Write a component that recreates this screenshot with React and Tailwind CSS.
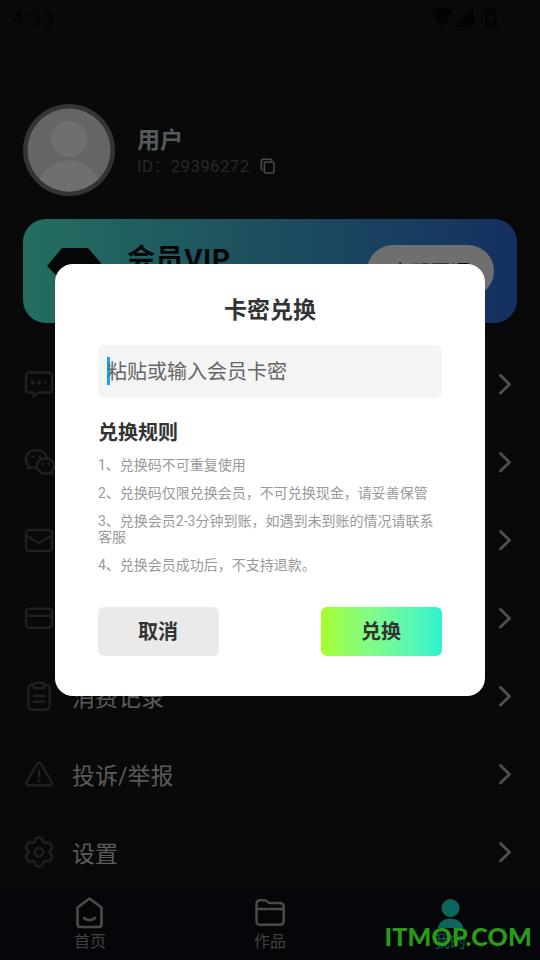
import React from 'react';

const ChatIcon = () => (
  <svg width="32" height="32" viewBox="0 0 32 32" fill="none" stroke="currentColor" strokeWidth="2.4" strokeLinejoin="round">
    <path d="M6 4.500h20a3 3 0 0 1 3 3v14a3 3 0 0 1-3 3H15.500l-5 4.500v-4.500H6a3 3 0 0 1-3-3v-14a3 3 0 0 1 3-3Z" />
    <g fill="currentColor" stroke="none">
      <circle cx="9.800" cy="14.500" r="1.900" />
      <circle cx="16" cy="14.500" r="1.900" />
      <circle cx="22.300" cy="14.500" r="1.900" opacity="0.5" />
    </g>
  </svg>
);

const WechatIcon = () => (
  <svg width="32" height="32" viewBox="0 0 32 32" fill="none" stroke="currentColor" strokeWidth="2.400" strokeLinejoin="round">
    <path d="M13.500 21.600c-1.800.300-3.400.100-5-.500l-3.500 1.400.500-3.300C3.500 17.500 2.800 15.300 2.800 13 2.800 7.800 7.500 4 13.300 4c5.300 0 9.800 3 10.600 8.300" />
    <path d="M22.500 12.500c-5 0-8.800 3.300-8.800 7.600s3.900 7.600 8.800 7.600c1.400 0 2.700-.300 3.900-.8l3.300 1.300-.9-3.200c1.600-1.400 2.400-3.100 2.400-4.900 0-4.300-3.900-7.600-8.700-7.600Z" />
    <g fill="currentColor" stroke="none">
      <circle cx="9.800" cy="11" r="1.400" />
      <circle cx="16.800" cy="11" r="1.400" />
      <circle cx="19.800" cy="18" r="1.400" />
      <circle cx="25.500" cy="18" r="1.400" />
    </g>
  </svg>
);

const MailIcon = () => (
  <svg width="32" height="32" viewBox="0 0 32 32" fill="none" stroke="currentColor" strokeWidth="2.400" strokeLinejoin="round">
    <rect x="3" y="6" width="26" height="21" rx="3" />
    <path d="m4 12 12 7 12-7" />
  </svg>
);

const CardIcon = () => (
  <svg width="32" height="32" viewBox="0 0 32 32" fill="none" stroke="currentColor" strokeWidth="2.400">
    <rect x="3" y="6.800" width="26" height="19" rx="3" />
    <path d="M3 13.800h26" />
  </svg>
);

const ClipboardIcon = () => (
  <svg width="32" height="32" viewBox="0 0 32 32" fill="none" stroke="currentColor" strokeWidth="2.400" strokeLinejoin="round" strokeLinecap="round">
    <path d="M10.500 4.600C7 4.600 5.300 6 5.300 9.300v16c0 3 1.500 4.500 4.500 4.500h12.400c3 0 4.500-1.500 4.500-4.500v-16c0-3.300-1.700-4.700-5.200-4.700" />
    <rect x="10.500" y="3" width="11" height="5.200" rx="2" />
    <path d="M10.800 16h10.500M10.800 21.700h10.500" />
  </svg>
);

const WarningIcon = () => (
  <svg width="32" height="32" viewBox="0 0 32 32" fill="none" stroke="currentColor" strokeWidth="2.400" strokeLinejoin="round" strokeLinecap="round">
    <path d="M14 6c1-1.700 3-1.700 4 0l10.500 18c1 1.700.2 3.200-1.700 3.200H5.200c-1.900 0-2.700-1.500-1.700-3.200Z" />
    <path d="M16 12.500v6" />
    <circle cx="16" cy="22.500" r="1.600" fill="currentColor" stroke="none" />
  </svg>
);

const GearIcon = () => (
  <svg width="32" height="32" viewBox="0 0 32 32" fill="none" stroke="currentColor" strokeWidth="2.400" strokeLinejoin="round">
    <path d="M12.300 4.300c.3-1.600 1.400-2.500 2.700-2.500h2c1.300 0 2.400.9 2.700 2.500.3 1.900 2 2.900 3.800 2.300 1.600-.6 3-.2 3.700 1l1.500 2.500c.7 1.200.4 2.500-.8 3.500-1.500 1.200-1.500 3.600 0 4.800 1.200 1 1.500 2.300.8 3.500l-1.500 2.500c-.7 1.200-2.100 1.600-3.700 1-1.800-.6-3.500.4-3.800 2.300-.3 1.600-1.400 2.500-2.700 2.500h-2c-1.300 0-2.400-.9-2.700-2.500-.3-1.900-2-2.900-3.800-2.300-1.600.6-3 .2-3.700-1l-1.500-2.500c-.7-1.200-.4-2.500.8-3.500 1.500-1.200 1.500-3.600 0-4.800-1.200-1-1.500-2.300-.8-3.500l1.500-2.500c.7-1.200 2.100-1.600 3.700-1 1.800.6 3.500-.4 3.800-2.300Z" />
    <circle cx="16" cy="16.200" r="4.200" />
  </svg>
);

const Chevron = () => (
  <svg className="text-[#4f4f4f]" width="14" height="24" viewBox="0 0 14 24" fill="none" stroke="currentColor" strokeWidth="2.800" strokeLinecap="round" strokeLinejoin="round">
    <path d="m2.500 3.500 9 8.800-9 8.800" />
  </svg>
);

const menu = [
  { icon: ChatIcon },
  { icon: WechatIcon },
  { icon: MailIcon },
  { icon: CardIcon },
  { icon: ClipboardIcon, label: '消费记录' },
  { icon: WarningIcon, label: '投诉/举报' },
  { icon: GearIcon, label: '设置' },
];

const rules = [
  '1、兑换码不可重复使用',
  '2、兑换码仅限兑换会员，不可兑换现金，请妥善保管',
  '3、兑换会员2-3分钟到账，如遇到未到账的情况请联系客服',
  '4、兑换会员成功后，不支持退款。',
];

const StatusBar = () => (
  <div className="flex h-9 shrink-0 justify-between pl-3 pr-[41px] text-[#030303]">
    <span className="mt-[5px] text-[21px] leading-7 tracking-[0.5px]">4:33</span>
    <svg className="mt-[6px]" width="68" height="24" viewBox="0 0 68 24" fill="currentColor">
      <path d="M0 6.500C6 .3 16.500.3 22 6.500L11 21Z" />
      <path d="M43 2v19H24Z" />
      <path d="M57 1h5v2h4v18H54V3h3Z" />
      <path d="m61 7-4 6h3l-1 4 4-6h-3Z" fill="#101010" />
    </svg>
  </div>
);

const Profile = () => (
  <div className="mt-[68px] flex h-[92px] shrink-0 px-[23px]">
    <svg width="92" height="92" viewBox="0 0 92 92">
      <defs>
        <clipPath id="avatar">
          <circle cx="46" cy="46" r="41.500" />
        </clipPath>
      </defs>
      <circle cx="46" cy="46" r="46" fill="#343434" />
      <circle cx="46" cy="46" r="41.500" fill="#646567" />
      <g fill="#6f6f6f" clipPath="url(#avatar)">
        <circle cx="46" cy="35" r="18.300" />
        <circle cx="46" cy="89" r="32.500" />
      </g>
    </svg>
    <div className="ml-[22px] mt-[22px]">
      <div className="text-[23px] font-bold leading-[30px] text-[#535b5f]">用户</div>
      <div className="flex items-center text-[17px] leading-5 tracking-[0.3px] text-[#25292c]">
        <span>ID：29396272</span>
        <svg className="ml-[10px]" width="16" height="16" viewBox="0 0 16 16" fill="none" stroke="#4b4b4b" strokeWidth="1.500">
          <rect x="4.300" y="4" width="9.700" height="11" rx="2" />
          <path d="M2.800 12.500C1.700 12.200 1.300 11.500 1.300 10.500V3.500c0-1.500.7-2.300 2.200-2.300H10c1.200 0 1.900.5 2.100 1.500" />
        </svg>
      </div>
    </div>
  </div>
);

const VipCard = () => (
  <div className="mx-[23px] mt-[23px] flex h-[104px] shrink-0 rounded-[23px] bg-linear-to-r from-[#236e60] via-[#1d4e5f] to-[#152f60] pl-[24px] pr-[23px]">
    <svg className="mt-[29px]" width="55" height="46" viewBox="0 0 55 46">
      <path d="M15 0h26l14.500 17L27.500 46 0 18Z" fill="#050608" />
    </svg>
    <div className="ml-[25px] mt-[21px] text-[28px] font-bold leading-10 tracking-[0.6px] text-[#050708]">会员VIP</div>
    <div className="ml-auto mt-[26px] flex h-[52px] w-[127px] items-center justify-center rounded-full bg-[#6f6f6f] pt-1 text-[20px] text-[#0b0b0b]">
      立即开通
    </div>
  </div>
);

const TabBar = () => (
  <div className="grid h-[73px] shrink-0 grid-cols-3 bg-[#05060a] text-[16px] leading-5 text-[#414141]">
    <div className="flex flex-col items-center pt-[10px]">
      <svg width="32" height="35" viewBox="0 0 32 35" fill="none" stroke="#4a4a4a" strokeWidth="2.700" strokeLinejoin="round" strokeLinecap="round">
        <path d="M15.500 1.500 27.500 10.500V27c0 2-1 3-3 3h-18c-2 0-3-1-3-3V10.500Z" />
        <path d="M10 21c3 2.800 8 2.800 11 0" />
      </svg>
      <span>首页</span>
    </div>
    <div className="flex flex-col items-center pt-[10px]">
      <svg width="32" height="35" viewBox="0 0 32 35" fill="none" stroke="#4a4a4a" strokeWidth="2.500" strokeLinejoin="round">
        <path d="M2.500 7c0-2.800 1-3.800 3.800-3.800h5c1.500 0 2.300 2.700 4 2.700h10.400c2.800 0 4 1 4 3.800v14.300c0 2.800-1.200 3.800-4 3.800H6.300c-2.800 0-3.800-1-3.800-3.800Z" />
        <path d="M2.500 12h27.200" />
      </svg>
      <span>作品</span>
    </div>
    <div className="flex flex-col items-center pt-[10px] text-[#0b5a53]">
      <svg width="32" height="35" viewBox="0 0 32 35" fill="#0d655d">
        <circle cx="16.500" cy="11" r="9" />
        <path d="M3.700 31c1.200-6 6-9.300 12.800-9.300S28.100 25 29.300 31Z" />
      </svg>
      <span>我的</span>
    </div>
  </div>
);

const RedeemDialog = () => (
  <div className="w-[430px] h-[432px] rounded-[18px] bg-white px-[43px] text-[#333]">
    <h2 className="pt-[31px] text-center text-[23px] font-bold leading-8">卡密兑换</h2>
    <div className="mt-[18px] flex h-[53px] items-center rounded-md bg-[#f4f4f4] pl-[9px] text-[20px] text-[#666]">
      <span className="-mr-[3px] -mt-[2px] h-7 w-[3px] bg-[#10a5ff]" />
      <span className="relative">粘贴或输入会员卡密</span>
    </div>
    <h3 className="mt-[21px] text-[20px] font-bold leading-7">兑换规则</h3>
    <div className="mt-[10px] space-y-3 text-[14px] leading-4 text-[#999]">
      {rules.map((rule) => (
        <p key={rule}>{rule}</p>
      ))}
    </div>
    <div className="mt-[34px] flex justify-between text-[20px] font-bold">
      <button className="h-[49px] w-[121px] rounded-md bg-[#eaeaea] pr-px">取消</button>
      <button className="h-[49px] w-[121px] rounded-md bg-linear-to-r from-[#a5ff20] to-[#2bf3cf] pr-px">兑换</button>
    </div>
  </div>
);

export default function App() {
  return (
    <div className="relative flex h-[960px] w-[540px] flex-col overflow-hidden bg-[#090909] font-[Roboto,'Noto_Sans_CJK_SC',sans-serif]">
      <StatusBar />
      <Profile />
      <VipCard />
      <div className="mt-[22px] min-h-0 flex-1">
        {menu.map(({ icon: Icon, label }, index) => (
          <div key={index} className="flex h-[78px] items-center pl-[23px] pr-[28px] text-[#1e2023]">
            <Icon />
            {label && <span className="ml-[17px] pt-[7px] text-[23px] text-[#5b5b5b]">{label}</span>}
            <span className="ml-auto">
              <Chevron />
            </span>
          </div>
        ))}
      </div>
      <TabBar />

      <div className="absolute left-[55px] top-[264px]">
        <RedeemDialog />
      </div>
      <div className="absolute bottom-[6px] right-[8px] font-[Lato,sans-serif] text-[25px] font-black leading-9 tracking-[0.2px] text-[#2b9b17]">
        ITMOP.COM
      </div>
    </div>
  );
}
